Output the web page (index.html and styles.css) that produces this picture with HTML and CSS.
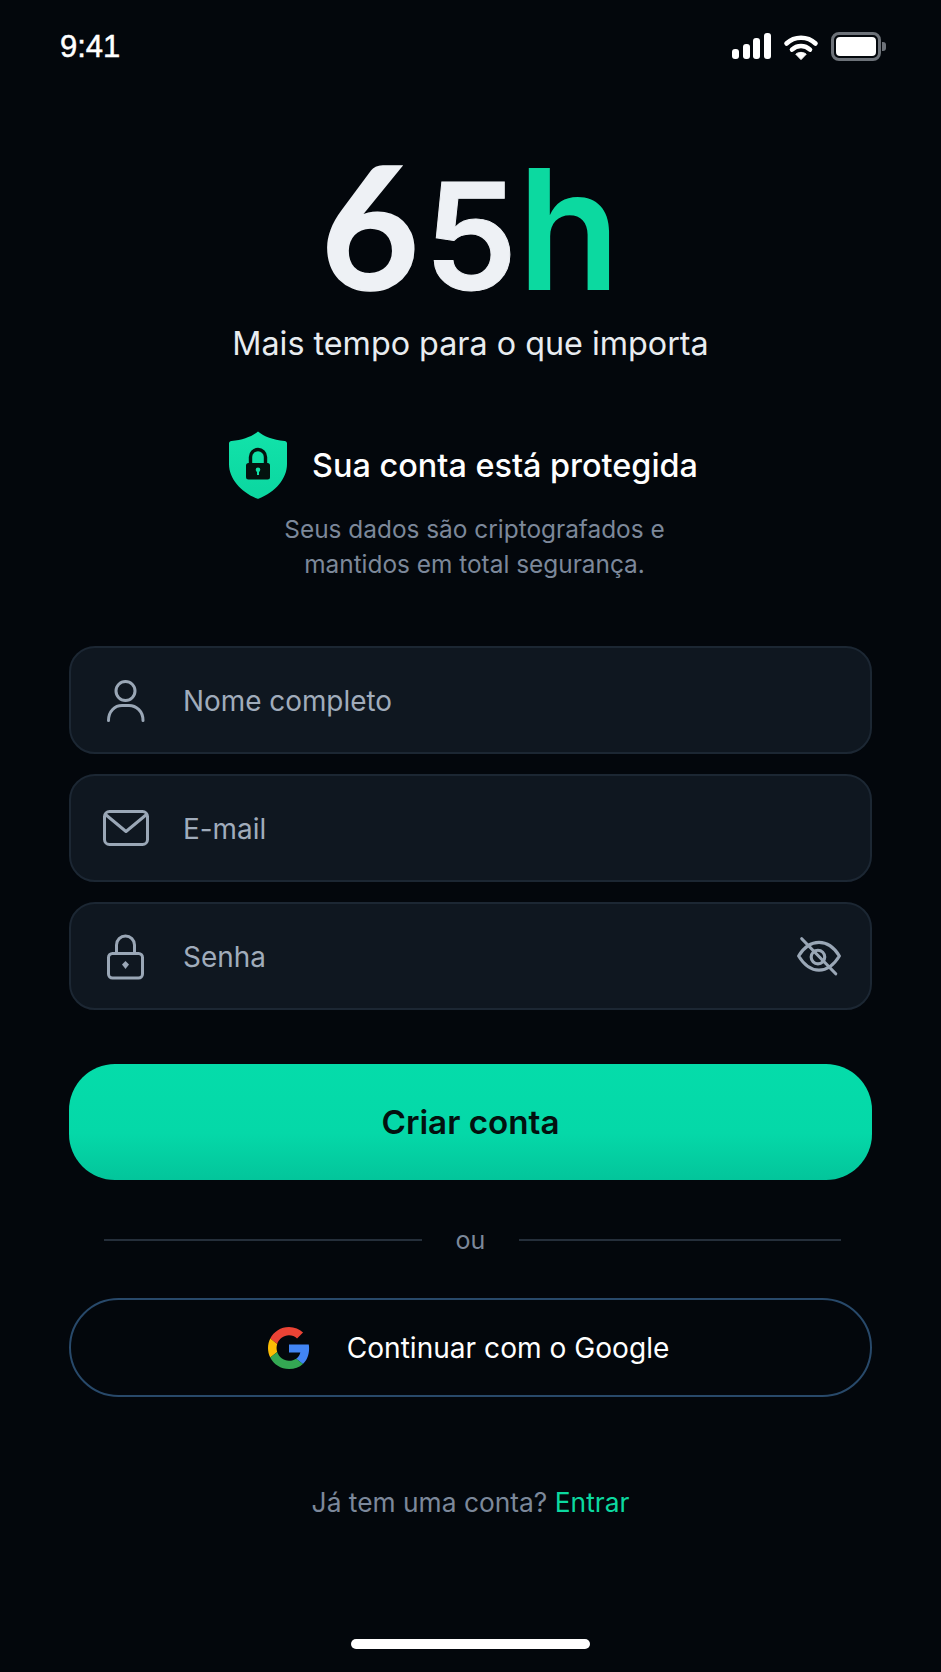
FILE: index.html
```html
<!DOCTYPE html>
<html lang="pt-BR">
<head>
<meta charset="utf-8">
<title>65h - Criar conta</title>
<link rel="stylesheet" href="styles.css">
</head>
<body>
<div class="screen">
  <div class="status">
    <span class="time">9:41</span>
    <div class="status-icons">
      <div class="signal"><i class="b1"></i><i class="b2"></i><i class="b3"></i><i class="b4"></i></div>
      <svg class="wifi" width="36" height="27" viewBox="0 0 36 27"><path d="M3.500 10.500C11.500 2.800 24.500 2.800 32.500 10.500M9 16.600C14 11.800 22 11.800 27 16.600" fill="none" stroke="#fff" stroke-width="4.600" stroke-linecap="round"/><path d="M12.800 21.200C15.500 18.800 20.500 18.800 23.200 21.200L18 26.600Z" fill="#fff" stroke="#fff" stroke-width="1" stroke-linejoin="round"/></svg>
      <div class="battery"><div class="battery-body"><div class="battery-fill"></div></div><div class="battery-nub"></div></div>
    </div>
  </div>

  <h1 class="hero"><span class="six">6</span><span class="five">5</span><span class="hour">h</span></h1>
  <p class="tagline">Mais tempo para o que importa</p>

  <div class="protect">
    <svg class="shield" width="58" height="68" viewBox="0 0 58 68"><defs><linearGradient id="shieldFill" x1="0" y1="0" x2="0" y2="1"><stop offset="0" stop-color="#12e3aa"/><stop offset="1" stop-color="#0bd6a0"/></linearGradient></defs><path d="M29 .5C35 5.500 44 9 55.500 10C57 10.200 58 11 58 12.500V33C58 48 46 61 30 67.600C29.300 67.900 28.700 67.900 28 67.600C12 61 0 48 0 33V12.500C0 11 1 10.200 2.500 10C14 9 23 5.500 29 .5Z" fill="url(#shieldFill)"/><path d="M21.500 33V26a7.500 7.500 0 0 1 15 0V33" fill="none" stroke="#04120f" stroke-width="3.400"/><rect x="17" y="32" width="24" height="16.500" rx="2.500" fill="#04120f"/><circle cx="29" cy="38.800" r="2.300" fill="#10dfa6"/><rect x="28" y="39" width="2" height="5" fill="#10dfa6"/></svg>
    <span class="protect-title">Sua conta está protegida</span>
  </div>
  <p class="protect-text">Seus dados são criptografados e<br>mantidos em total segurança.</p>

  <form class="fields">
    <div class="field">
      <svg class="icon" width="48" height="48" viewBox="0 0 48 48"><circle cx="23.500" cy="15" r="9.500"/><path d="M6.500 44.500C6.500 35 13 29.500 20 29.500H27C34 29.500 41 35 41 44.500"/></svg>
      <span class="ph">Nome completo</span>
    </div>
    <div class="field">
      <svg class="icon" width="48" height="48" viewBox="0 0 48 48"><rect x="2.500" y="7.500" width="43" height="33" rx="5"/><path d="M3.500 10.500L24 27.500L44.500 10.500"/></svg>
      <span class="ph">E-mail</span>
    </div>
    <div class="field">
      <svg class="icon" width="48" height="48" viewBox="0 0 48 48"><rect x="6.500" y="21.500" width="34" height="24.500" rx="4"/><path d="M14.500 21.500V13a9 9 0 0 1 18 0V21.500"/><path class="key" d="M23.500 29L27 32.500L23.500 37L20 32.500Z"/></svg>
      <span class="ph">Senha</span>
      <svg class="icon eye" width="46" height="42" viewBox="0 0 44 40"><path d="M2.500 20C8 11 15 7 22 7C29 7 36 11 41.500 20C36 29 29 33.500 22 33.500C15 33.500 8 29 2.500 20Z"/><circle cx="21" cy="21" r="6.500"/><path d="M5.500 3.500L38 37"/></svg>
    </div>
  </form>

  <button class="primary" type="button">Criar conta</button>

  <div class="divider"><span class="rule rule-left"></span><span class="or">ou</span><span class="rule"></span></div>

  <button class="google" type="button">
    <svg width="42" height="44" viewBox="0 0 48 48"><path fill="#EA4335" d="M24 9.500c3.540 0 6.710 1.220 9.210 3.600l6.850-6.850C35.900 2.380 30.470 0 24 0 14.620 0 6.510 5.380 2.560 13.220l7.980 6.190C12.430 13.720 17.740 9.500 24 9.500z"/><path fill="#4285F4" d="M46.980 24.550c0-1.570-.15-3.090-.38-4.550H24v9.020h12.940c-.58 2.960-2.260 5.480-4.780 7.180l7.730 6c4.510-4.180 7.090-10.360 7.090-17.650z"/><path fill="#FBBC05" d="M10.530 28.590c-.48-1.450-.76-2.990-.76-4.590s.27-3.140.76-4.590l-7.980-6.190C.92 16.460 0 20.120 0 24c0 3.880.92 7.540 2.560 10.780l7.970-6.190z"/><path fill="#34A853" d="M24 48c6.480 0 11.930-2.130 15.890-5.810l-7.730-6c-2.150 1.450-4.920 2.300-8.160 2.300-6.260 0-11.570-4.220-13.470-9.910l-7.980 6.190C6.510 42.620 14.620 48 24 48z"/></svg>
    <span>Continuar com o Google</span>
  </button>

  <p class="signin">Já tem uma conta? <a href="#">Entrar</a></p>

  <div class="home"></div>
</div>
</body>
</html>
```
FILE: styles.css
```css
* { box-sizing: border-box; }
html, body { margin: 0; padding: 0; background: #03070c; }
body { font-family: "Inter", "Liberation Sans", sans-serif; }
.screen {
  width: 941px;
  height: 1672px;
  display: flex;
  flex-direction: column;
  align-items: center;
  padding: 0 69px;
  background: #03070c;
  overflow: hidden;
}
.status {
  width: 100%;
  height: 92px;
  flex: none;
  display: flex;
  align-items: center;
  justify-content: space-between;
}
.time { margin-left: -9px; padding-top: 2px; font-family: "Liberation Sans", sans-serif; font-size: 31px; color: #fff; -webkit-text-stroke: 0.5px #fff; }
.status-icons { display: flex; align-items: center; margin-right: -14px; gap: 12px; }
.signal { display: flex; align-items: flex-end; gap: 3.67px; height: 26px; }
.signal i { display: block; width: 7px; background: #fff; border-radius: 3px; }
.b1 { height: 10px; }
.b2 { height: 15px; }
.b3 { height: 21px; }
.b4 { height: 26px; }
.battery { display: flex; align-items: center; gap: 1px; }
.battery-body { width: 50px; height: 29px; border: 3px solid #6d7279; border-radius: 8px; padding: 2px; }
.battery-fill { width: 100%; height: 100%; background: #fff; border-radius: 4px; }
.battery-nub { width: 4px; height: 9px; background: #6d7279; border-radius: 0 3px 3px 0; }
.hero {
  margin: 52px 0 0;
  height: 160px;
  line-height: 160px;
  font-weight: 600;
  color: #eef1f5;
  white-space: nowrap;
}
.six { font-family: "Lato", sans-serif; font-weight: 700; font-size: 170px; -webkit-text-stroke: 1.5px #eef1f5; }
.five { font-size: 148px; margin-left: 5px; -webkit-text-stroke: 1px #eef1f5; }
.hour { font-size: 168px; color: #0cd9a0; }
.tagline { margin: 18px 0 0; font-size: 32.3px; line-height: 44px; color: #e8ecf0; }
.protect { margin-top: 65px; margin-left: -14px; display: flex; align-items: center; gap: 25px; }
.protect-title { font-size: 32.4px; font-weight: 480; color: #fff; }
.protect-text { margin: 13px 0 0 8px; font-size: 24.4px; line-height: 35px; text-align: center; color: #7c889a; }
.fields { width: 100%; margin-top: 64px; display: flex; flex-direction: column; gap: 20px; }
.field {
  height: 108px;
  display: flex;
  align-items: center;
  gap: 33px;
  padding: 0 28px 0 31px;
  background: #0f1720;
  border: 2px solid #1c2733;
  border-radius: 26px;
}
.ph { flex: 1; padding-top: 1px; font-size: 27.9px; color: #a0acbb; }
.icon { flex: none; fill: none; stroke: #9aa7b6; stroke-width: 3; stroke-linecap: round; stroke-linejoin: round; }
.key { fill: #9aa7b6; stroke: none; }
.primary {
  width: 100%;
  height: 116px;
  margin-top: 54px;
  flex: none;
  border: 0;
  border-radius: 46px;
  background: linear-gradient(180deg, #05dcaa 0%, #05d8a8 60%, #03c59b 100%);
  font-family: inherit;
  font-size: 33.2px;
  font-weight: 600;
  color: #03110f;
}
.divider { width: 100%; margin-top: 47px; padding: 0 31px 0 35px; display: flex; align-items: center; height: 26px; }
.rule { flex: 1; height: 2px; background: #252f3b; }
.rule-left { flex: none; width: 318px; }
.or { width: 97px; text-align: center; font-size: 25px; color: #7c889a; }
.google {
  width: 100%;
  height: 99px;
  margin-top: 45px;
  padding: 0 4px 0 0;
  flex: none;
  display: flex;
  align-items: center;
  justify-content: center;
  gap: 37px;
  background: transparent;
  border: 2px solid #28496a;
  border-radius: 50px;
  font-family: inherit;
  font-size: 28.1px;
  font-weight: 430;
  color: #fff;
}
.signin { margin: 87px 0 0; font-size: 26.35px; line-height: 36px; color: #7c889a; }
.signin a { color: #0cd9a0; text-decoration: none; }
.home { width: 239px; height: 10px; margin-top: 119px; flex: none; border-radius: 5px; background: #fff; }
```
